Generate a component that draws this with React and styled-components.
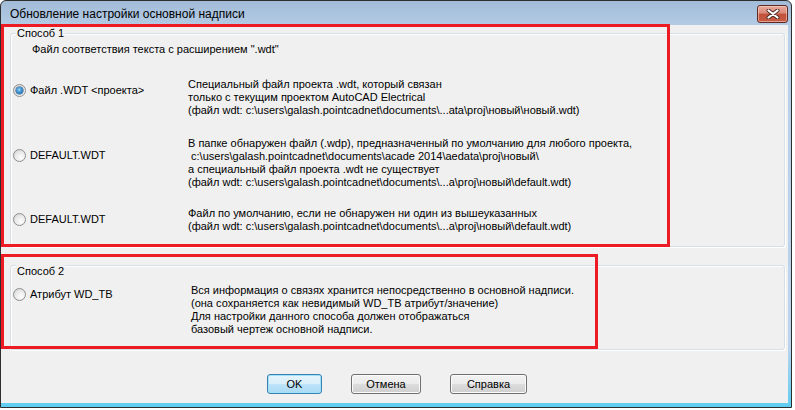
import React from 'react';
import styled, { createGlobalStyle } from 'styled-components';

const GlobalStyle = createGlobalStyle`
  body {
    margin: 0;
    background: #ffffff;
    font-family: "Liberation Sans", Arial, sans-serif;
  }
`;

const Window = styled.div`
  position: relative;
  width: 792px;
  height: 408px;
  box-sizing: border-box;
  border: 1px solid #2e2e2e;
  border-radius: 6px 6px 0 0;
  background: linear-gradient(#a2bbd7, #b7cfe8 30px, #bcd4ec 85%, #5fcdf2);
  display: flex;
  flex-direction: column;
  overflow: hidden;
`;

const TitleBar = styled.div`
  height: 24px;
  flex: none;
  display: flex;
  align-items: center;
  justify-content: space-between;
  padding: 1px 3px 0 9px;
  box-sizing: border-box;
  font-family: "Liberation Sans", Arial, sans-serif;
  font-size: 12px;
  color: #000000;
`;

const CloseButton = styled.div`
  width: 31px;
  height: 18px;
  box-sizing: border-box;
  border: 1px solid #5c2a22;
  border-radius: 3px;
  background: linear-gradient(#e9a99b 0%, #d98a79 45%, #c2513c 50%, #c65b42 100%);
  box-shadow: inset 0 0 0 1px rgba(255, 220, 210, 0.55);
  display: flex;
  align-items: center;
  justify-content: center;
  margin-top: 1px;
`;

const Client = styled.div`
  flex: 1;
  margin: 0 3px 4px 0;
  padding: 8px 3px 0 9px;
  background: #f0f0f0;
  display: flex;
  flex-direction: column;
  font-size: 11px;
  line-height: 13px;
  color: #000000;
`;

const GroupBox = styled.div`
  position: relative;
  height: ${(p) => p.$h}px;
  box-sizing: border-box;
  border: 1px solid #d5dfe5;
  border-radius: 3px;
  box-shadow: inset 1px 1px 0 #ffffff, 1px 1px 0 #ffffff;
  padding: ${(p) => p.$pad};
  margin-top: ${(p) => p.$mt}px;
`;

const Legend = styled.span`
  position: absolute;
  left: 5px;
  top: ${(p) => p.$top}px;
  padding: 0 1px;
  background: #f0f0f0;
`;

const Intro = styled.div`
  margin-left: 19px;
`;

const Row = styled.div`
  display: grid;
  grid-template-columns: ${(p) => p.$labelW}px 1fr;
  margin-top: ${(p) => p.$mt}px;
`;

const Option = styled.div`
  display: flex;
  align-items: center;
  gap: 4px;
  height: 13px;
  margin-top: ${(p) => p.$mt}px;
`;

const Radio = styled.span`
  position: relative;
  flex: none;
  width: 13px;
  height: 13px;
  box-sizing: border-box;
  border-radius: 50%;
  border: 1px solid #8e8f8f;
  background: radial-gradient(circle at 62% 68%, #fdfdfd 0%, #ececec 45%, #cdcdcd 100%);

  &::after {
    content: '';
    display: ${(p) => (p.$checked ? 'block' : 'none')};
    position: absolute;
    left: 2px;
    top: 2px;
    width: 7px;
    height: 7px;
    border-radius: 50%;
    background: radial-gradient(circle at 45% 40%, #9fdcfa 0%, #3b8fd0 45%, #0f4d85 100%);
    box-shadow: 0 0 0 0.5px #1b4c78;
  }
`;

const Desc = styled.div`
  display: flex;
  flex-direction: column;
`;

const Line = styled.div`
  white-space: pre;
`;

const ButtonRow = styled.div`
  display: flex;
  gap: 29px;
  margin: 24px 0 0 257px;
`;

const Button = styled.button`
  width: ${(p) => p.$w}px;
  height: 20px;
  box-sizing: border-box;
  padding: 0;
  border: 1px solid ${(p) => (p.$default ? '#3c7fb1' : '#707070')};
  border-radius: 3px;
  background: ${(p) =>
    p.$default
      ? 'linear-gradient(#e5f4fc 0%, #d8effb 50%, #bde4fa 50%, #a9d9f4 100%)'
      : 'linear-gradient(#f2f2f2 0%, #ebebeb 50%, #dddddd 50%, #cfcfcf 100%)'};
  box-shadow: inset 0 0 0 1px ${(p) => (p.$default ? '#9fe3fb' : '#fbfbfb')};
  font-family: "Liberation Sans", Arial, sans-serif;
  font-size: 11px;
  color: #000000;
`;

const Annotation = styled.div`
  position: absolute;
  left: ${(p) => p.$x}px;
  top: ${(p) => p.$y}px;
  width: ${(p) => p.$w}px;
  height: ${(p) => p.$h}px;
  box-sizing: border-box;
  border: 3px solid #ed1c24;
  pointer-events: none;
`;

const CloseGlyph = () => (
  <svg width="14" height="10" viewBox="0 0 14 10">
    <path d="M2.5 1.5 L11.5 8.5 M11.5 1.5 L2.5 8.5" stroke="#4a2a26" strokeWidth="4" strokeLinecap="round" />
    <path d="M2.5 1.5 L11.5 8.5 M11.5 1.5 L2.5 8.5" stroke="#ffffff" strokeWidth="2.2" strokeLinecap="round" />
  </svg>
);

const rows = [
  {
    label: 'Файл .WDT <проекта>',
    checked: true,
    mt: 22,
    labelMt: 6,
    lines: [
      'Специальный файл проекта .wdt, который связан',
      'только с текущим проектом AutoCAD Electrical',
      '(файл wdt: c:\\users\\galash.pointcadnet\\documents\\...ata\\proj\\новый\\новый.wdt)',
    ],
  },
  {
    label: 'DEFAULT.WDT',
    mt: 20,
    labelMt: 12,
    lines: [
      'В папке обнаружен файл (.wdp), предназначенный по умолчанию для любого проекта,',
      ' c:\\users\\galash.pointcadnet\\documents\\acade 2014\\aedata\\proj\\новый\\',
      'а специальный файл проекта .wdt не существует',
      '(файл wdt: c:\\users\\galash.pointcadnet\\documents\\...a\\proj\\новый\\default.wdt)',
    ],
  },
  {
    label: 'DEFAULT.WDT',
    mt: 18,
    labelMt: 6,
    lines: [
      'Файл по умолчанию, если не обнаружен ни один из вышеуказанных',
      '(файл wdt: c:\\users\\galash.pointcadnet\\documents\\...a\\proj\\новый\\default.wdt)',
    ],
  },
];

const OptionRow = ({ label, checked, mt, labelMt, lines, labelW = 175 }) => (
  <Row $mt={mt} $labelW={labelW}>
    <Option $mt={labelMt}>
      <Radio $checked={checked} />
      <span>{label}</span>
    </Option>
    <Desc>
      {lines.map((l, i) => (
        <Line key={i}>{l}</Line>
      ))}
    </Desc>
  </Row>
);

export default function App() {
  return (
    <>
      <GlobalStyle />
      <Window>
        <TitleBar>
          <span>Обновление настройки основной надписи</span>
          <CloseButton>
            <CloseGlyph />
          </CloseButton>
        </TitleBar>
        <Client>
          <GroupBox $h={214} $mt={0} $pad="9px 0 0 2px">
            <Legend $top={-7}>Способ 1</Legend>
            <Intro>Файл соответствия текста с расширением ".wdt"</Intro>
            {rows.map((r, i) => (
              <OptionRow key={i} {...r} />
            ))}
          </GroupBox>
          <GroupBox $h={85} $mt={18} $pad="18px 0 0 2px">
            <Legend $top={-1}>Способ 2</Legend>
            <OptionRow
              label="Атрибут WD_TB"
              mt={0}
              labelMt={4}
              labelW={178}
              lines={[
                'Вся информация о связях хранится непосредственно в основной надписи.',
                '(она сохраняется как невидимый WD_TB атрибут/значение)',
                'Для настройки данного способа должен отображаться',
                'базовый чертеж основной надписи.',
              ]}
            />
          </GroupBox>
          <ButtonRow>
            <Button $w={55} $default>OK</Button>
            <Button $w={70}>Отмена</Button>
            <Button $w={77}>Справка</Button>
          </ButtonRow>
        </Client>
        <Annotation $x={0} $y={23} $w={669} $h={223} />
        <Annotation $x={0} $y={253} $w={597} $h={95} />
      </Window>
    </>
  );
}
